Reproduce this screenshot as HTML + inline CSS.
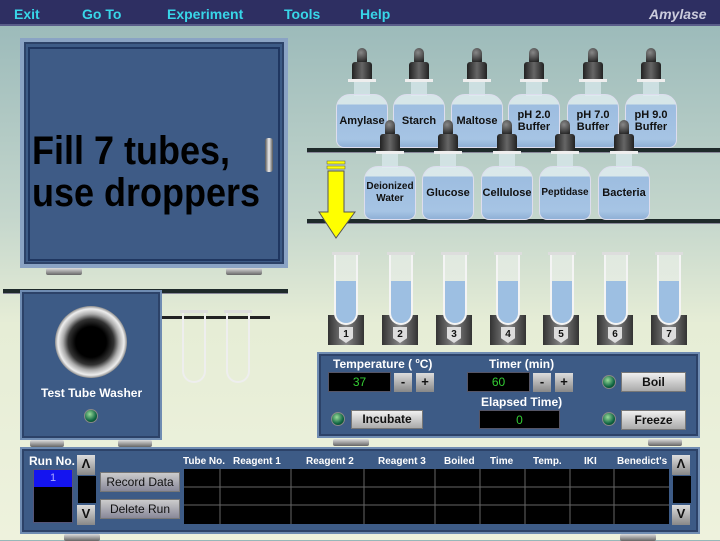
<!DOCTYPE html>
<html><head><meta charset="utf-8"><style>
*{margin:0;padding:0;box-sizing:border-box}
body{width:720px;height:540px;overflow:hidden;position:relative;font-family:"Liberation Sans",sans-serif;background:linear-gradient(#97b7b8 0%,#c4d6cc 40%,#e6edd6 60%,#eef2dd 100%)}
.a{position:absolute}
.menu{left:0;top:0;width:720px;height:26px;background:#2e2f62;border-bottom:2px solid #5a5d8a}
.menu span{position:absolute;top:6px;color:#38d6e8;font-weight:bold;font-size:14px}
.panel{background:#3d5b86;border:2px solid #6f8cb2;box-shadow:inset 0 0 0 2px #2c4268}
.foot{height:7px;background:linear-gradient(#ddd,#666);border-radius:2px}
.shelf{height:5px;background:#1e2a2a;border-bottom:1px solid #889}
.btl{position:absolute;width:56px;height:110px}
.btl .bulb{position:absolute;left:23px;top:0;width:10px;height:15px;border-radius:5px 5px 2px 2px;background:radial-gradient(circle at 40% 30%,#888,#111)}
.btl .cap{position:absolute;left:18px;top:14px;width:20px;height:17px;background:linear-gradient(90deg,#222,#666,#222);border-radius:3px 3px 0 0}
.btl .col{position:absolute;left:14px;top:31px;width:28px;height:3px;background:#eee}
.btl .neck{position:absolute;left:20px;top:34px;width:16px;height:14px;background:rgba(220,235,240,.7)}
.btl .body{position:absolute;left:2px;top:46px;width:52px;height:54px;border-radius:14px 14px 8px 8px;background:linear-gradient(rgba(225,238,242,.8) 0 18%,#9dbde0 18%,#a6c4e4 85%,#8fb0d6 100%);border:1px solid #dde;font-weight:bold;font-size:11px;color:#111;text-align:center;display:flex;align-items:center;justify-content:center;line-height:12px}
.tube{position:absolute;z-index:2;width:24px;height:70px;border:2px solid #f4f4f4;border-top:none;border-radius:0 0 12px 12px;background:linear-gradient(rgba(235,240,235,.6) 0 38%,#9dbfe2 38%)}
.tube:before{content:"";position:absolute;left:-4px;top:-3px;width:28px;height:3px;background:#ddd}
.hold{position:absolute;z-index:1;width:36px;height:30px;background:linear-gradient(90deg,#333,#888 50%,#333);}
.hold b{position:absolute;z-index:3;left:11px;top:12px;width:14px;height:16px;background:#ddd;clip-path:polygon(0 0,100% 0,100% 70%,50% 100%,0 70%);font-size:10px;text-align:center;color:#111;line-height:15px}
.num{position:absolute;z-index:3;width:14px;height:16px;background:#ddd;clip-path:polygon(0 0,100% 0,100% 70%,50% 100%,0 70%);font-size:10px;font-weight:bold;text-align:center;color:#111;line-height:15px}
.disp{position:absolute;background:#000;border:1px solid #556;color:#3c3;font-size:12px;text-align:center;line-height:18px}
.btn{position:absolute;background:linear-gradient(#f0f0f0,#aaa);border:1px solid #777;color:#111;font-weight:bold;font-size:12px;text-align:center}
.sbtn{position:absolute;width:18px;height:19px;background:linear-gradient(#ddd,#888);font-weight:bold;font-size:13px;text-align:center;line-height:18px;color:#111}
.led{position:absolute;width:14px;height:14px;border-radius:50%;background:radial-gradient(circle at 40% 35%,#9d9,#164 60%,#031);border:1px solid #888}
.lbl{position:absolute;color:#fff;font-weight:bold;font-size:12px}
.hd{position:absolute;top:456px;color:#fff;font-weight:bold;font-size:10px}
</style></head><body>
<div class="a menu"><span style="left:14px">Exit</span><span style="left:82px">Go To</span><span style="left:167px">Experiment</span><span style="left:284px">Tools</span><span style="left:360px">Help</span><span style="left:649px;color:#ccd;font-style:italic">Amylase</span></div>

<div class="a panel" style="left:20px;top:38px;width:268px;height:230px;border-color:#8aa3c4;border-width:4px"></div>
<div class="a" style="left:28px;top:47px;width:252px;height:214px;border:2px solid #1f3660;background:#3e5b86"></div>
<div class="a" style="left:32px;top:130px;font-size:40px;font-weight:bold;color:#000;line-height:42px;white-space:nowrap;transform:scaleX(.9);transform-origin:left top">Fill 7 tubes,<br>use droppers</div>
<div class="a" style="left:265px;top:138px;width:8px;height:34px;border-radius:3px;background:linear-gradient(90deg,#555,#eee,#555)"></div>
<div class="a foot" style="left:46px;top:268px;width:36px"></div><div class="a foot" style="left:226px;top:268px;width:36px"></div>
<div class="a shelf" style="left:3px;top:289px;width:285px"></div>

<div class="a shelf" style="left:307px;top:148px;width:413px"></div>
<div class="a shelf" style="left:307px;top:219px;width:413px"></div>

<div class="btl" style="left:334px;top:48px"><div class="bulb"></div><div class="cap"></div><div class="col"></div><div class="neck"></div><div class="body">Amylase</div></div>
<div class="btl" style="left:391px;top:48px"><div class="bulb"></div><div class="cap"></div><div class="col"></div><div class="neck"></div><div class="body">Starch</div></div>
<div class="btl" style="left:449px;top:48px"><div class="bulb"></div><div class="cap"></div><div class="col"></div><div class="neck"></div><div class="body">Maltose</div></div>
<div class="btl" style="left:506px;top:48px"><div class="bulb"></div><div class="cap"></div><div class="col"></div><div class="neck"></div><div class="body">pH 2.0<br>Buffer</div></div>
<div class="btl" style="left:565px;top:48px"><div class="bulb"></div><div class="cap"></div><div class="col"></div><div class="neck"></div><div class="body">pH 7.0<br>Buffer</div></div>
<div class="btl" style="left:623px;top:48px"><div class="bulb"></div><div class="cap"></div><div class="col"></div><div class="neck"></div><div class="body">pH 9.0<br>Buffer</div></div>

<div class="btl" style="left:362px;top:120px"><div class="bulb"></div><div class="cap"></div><div class="col"></div><div class="neck"></div><div class="body" style="font-size:10px">Deionized<br>Water</div></div>
<div class="btl" style="left:420px;top:120px"><div class="bulb"></div><div class="cap"></div><div class="col"></div><div class="neck"></div><div class="body">Glucose</div></div>
<div class="btl" style="left:479px;top:120px"><div class="bulb"></div><div class="cap"></div><div class="col"></div><div class="neck"></div><div class="body">Cellulose</div></div>
<div class="btl" style="left:537px;top:120px"><div class="bulb"></div><div class="cap"></div><div class="col"></div><div class="neck"></div><div class="body" style="font-size:10px">Peptidase</div></div>
<div class="btl" style="left:596px;top:120px"><div class="bulb"></div><div class="cap"></div><div class="col"></div><div class="neck"></div><div class="body">Bacteria</div></div>

<svg class="a" style="left:318px;top:160px" width="40" height="80"><rect x="9" y="1" width="18" height="3" fill="#ff0" stroke="#555" stroke-width=".5"/><rect x="9" y="6" width="18" height="3" fill="#ff0" stroke="#555" stroke-width=".5"/><polygon points="10,11 26,11 26,52 37,52 18,78 1,52 10,52" fill="#ff0" stroke="#555" stroke-width="1"/></svg>

<div class="tube" style="left:334px;top:255px"></div>
<div class="tube" style="left:389px;top:255px"></div>
<div class="tube" style="left:443px;top:255px"></div>
<div class="tube" style="left:496px;top:255px"></div>
<div class="tube" style="left:550px;top:255px"></div>
<div class="tube" style="left:604px;top:255px"></div>
<div class="tube" style="left:657px;top:255px"></div>
<div class="hold" style="left:328px;top:315px"></div><div class="num" style="left:339px;top:327px">1</div>
<div class="hold" style="left:382px;top:315px"></div><div class="num" style="left:393px;top:327px">2</div>
<div class="hold" style="left:436px;top:315px"></div><div class="num" style="left:447px;top:327px">3</div>
<div class="hold" style="left:490px;top:315px"></div><div class="num" style="left:501px;top:327px">4</div>
<div class="hold" style="left:543px;top:315px"></div><div class="num" style="left:554px;top:327px">5</div>
<div class="hold" style="left:597px;top:315px"></div><div class="num" style="left:608px;top:327px">6</div>
<div class="hold" style="left:651px;top:315px"></div><div class="num" style="left:662px;top:327px">7</div>

<div class="a panel" style="left:20px;top:290px;width:142px;height:150px"></div>
<div class="a" style="left:55px;top:306px;width:72px;height:72px;border-radius:50%;background:radial-gradient(circle,#000 30%,#333 45%,#aaa 55%,#eee 65%,#777 72%)"></div>
<div class="lbl" style="left:41px;top:386px">Test Tube Washer</div>
<div class="led" style="left:84px;top:409px"></div>
<div class="a foot" style="left:30px;top:440px;width:34px"></div><div class="a foot" style="left:118px;top:440px;width:34px"></div>
<div class="a" style="left:162px;top:316px;width:108px;height:3px;background:#222"></div>
<div class="tube" style="left:182px;top:313px;height:70px;background:none;border-color:#eee"></div>
<div class="tube" style="left:226px;top:313px;height:70px;background:none;border-color:#eee"></div>

<div class="a panel" style="left:317px;top:352px;width:383px;height:86px"></div>
<div class="lbl" style="left:333px;top:357px">Temperature ( <sup style="font-size:7px">o</sup>C)</div>
<div class="disp" style="left:328px;top:372px;width:63px;height:20px">37</div>
<div class="sbtn" style="left:394px;top:373px">-</div><div class="sbtn" style="left:416px;top:373px">+</div>
<div class="lbl" style="left:489px;top:357px">Timer (min)</div>
<div class="disp" style="left:467px;top:372px;width:63px;height:20px">60</div>
<div class="sbtn" style="left:533px;top:373px">-</div><div class="sbtn" style="left:555px;top:373px">+</div>
<div class="led" style="left:602px;top:375px"></div>
<div class="btn" style="left:621px;top:372px;width:65px;height:20px;line-height:18px">Boil</div>
<div class="lbl" style="left:481px;top:395px">Elapsed Time)</div>
<div class="disp" style="left:479px;top:410px;width:81px;height:19px">0</div>
<div class="led" style="left:331px;top:412px"></div>
<div class="btn" style="left:351px;top:410px;width:72px;height:19px;line-height:17px">Incubate</div>
<div class="led" style="left:602px;top:412px"></div>
<div class="btn" style="left:621px;top:410px;width:65px;height:20px;line-height:18px">Freeze</div>
<div class="a foot" style="left:333px;top:439px;width:36px"></div><div class="a foot" style="left:648px;top:439px;width:34px"></div>

<div class="a panel" style="left:20px;top:447px;width:680px;height:87px"></div>
<div class="lbl" style="left:29px;top:454px">Run No.</div>
<div class="a" style="left:33px;top:469px;width:40px;height:54px;background:#000;border:1px solid #557"></div>
<div class="a" style="left:34px;top:470px;width:38px;height:17px;background:#1414f0;color:#aaf;font-size:11px;text-align:center;line-height:16px">1</div>
<div class="sbtn" style="left:77px;top:455px;height:20px">Λ</div>
<div class="a" style="left:78px;top:476px;width:18px;height:27px;background:#000"></div>
<div class="sbtn" style="left:77px;top:505px;height:20px">V</div>
<div class="btn" style="left:100px;top:472px;width:80px;height:20px;line-height:18px;font-weight:normal;background:linear-gradient(#ccc,#889)">Record Data</div>
<div class="btn" style="left:100px;top:499px;width:80px;height:20px;line-height:18px;font-weight:normal;background:linear-gradient(#ccc,#889)">Delete Run</div>
<div class="hd" style="left:183px">Tube No.</div><div class="hd" style="left:233px">Reagent 1</div><div class="hd" style="left:306px">Reagent 2</div><div class="hd" style="left:378px">Reagent 3</div><div class="hd" style="left:444px">Boiled</div><div class="hd" style="left:490px">Time</div><div class="hd" style="left:533px">Temp.</div><div class="hd" style="left:584px">IKI</div><div class="hd" style="left:617px">Benedict's</div>
<svg class="a" style="left:184px;top:469px" width="485" height="55"><rect width="485" height="55" fill="#000"/><g stroke="#666" stroke-width="1"><line x1="0" y1="18" x2="485" y2="18"/><line x1="0" y1="36" x2="485" y2="36"/><line x1="36" y1="0" x2="36" y2="55"/><line x1="107" y1="0" x2="107" y2="55"/><line x1="180" y1="0" x2="180" y2="55"/><line x1="251" y1="0" x2="251" y2="55"/><line x1="296" y1="0" x2="296" y2="55"/><line x1="341" y1="0" x2="341" y2="55"/><line x1="386" y1="0" x2="386" y2="55"/><line x1="430" y1="0" x2="430" y2="55"/></g></svg>
<div class="sbtn" style="left:672px;top:455px;height:20px">Λ</div>
<div class="a" style="left:673px;top:476px;width:18px;height:27px;background:#000"></div>
<div class="sbtn" style="left:672px;top:505px;height:20px">V</div>
<div class="a foot" style="left:64px;top:534px;width:36px"></div><div class="a foot" style="left:620px;top:534px;width:36px"></div>
</body></html>
